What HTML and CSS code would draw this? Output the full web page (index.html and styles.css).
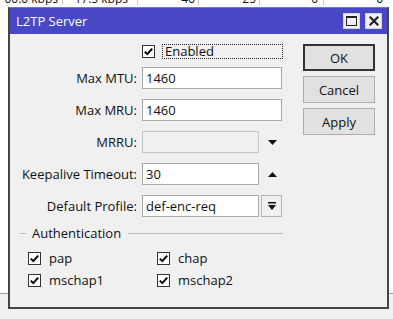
FILE: index.html
```html
<!DOCTYPE html>
<html>
<head>
<meta charset="utf-8">
<link rel="stylesheet" href="styles.css">
</head>
<body>
<div class="desk">
  <div class="table">
    <div class="row">
      <div class="cell c1"><span>00.0 kbps</span></div>
      <div class="cell c2"><span>17.5 kbps</span></div>
      <div class="cell c3"><span>40</span></div>
      <div class="cell c4"><span>25</span></div>
      <div class="cell c5"><span>0</span></div>
      <div class="cell c6"><span>0</span></div>
    </div>
  </div>

  <div class="window">
    <div class="titlebar">
      <span class="title">L2TP Server</span>
      <div class="tbtns">
        <div class="tbtn"><svg width="11" height="10" viewBox="0 0 11 10"><rect x="0.5" y="1" width="10" height="8.5" fill="none" stroke="#222" stroke-width="1"/><rect x="0" y="0" width="11" height="2" fill="#222"/></svg></div>
        <div class="tbtn"><svg width="10" height="10" viewBox="0 0 10 10"><path d="M1.5 1.5 L8.5 8.5 M8.5 1.5 L1.5 8.5" stroke="#222" stroke-width="2.2" stroke-linecap="square"/></svg></div>
      </div>
    </div>

    <div class="body">
      <div class="form">
        <div class="enabled">
          <div class="cb"><svg width="11" height="11" viewBox="0 0 11 11"><path d="M1.8 5.6 L4.3 8.1 L9.2 2.6" fill="none" stroke="#000" stroke-width="2"/></svg></div>
          <div class="focus">Enabled</div>
        </div>

        <div class="field first">
          <div class="lbl">Max MTU:</div>
          <div class="input">1460</div>
        </div>
        <div class="field">
          <div class="lbl">Max MRU:</div>
          <div class="input">1460</div>
        </div>
        <div class="field">
          <div class="lbl">MRRU:</div>
          <div class="input short disabled"></div>
          <div class="arrow"><svg width="9" height="5" viewBox="0 0 9 5"><polygon points="0,0 9,0 4.5,5" fill="#111"/></svg></div>
        </div>
        <div class="field">
          <div class="lbl">Keepalive Timeout:</div>
          <div class="input short">30</div>
          <div class="arrow"><svg width="9" height="5" viewBox="0 0 9 5"><polygon points="0,5 9,5 4.5,0" fill="#111"/></svg></div>
        </div>
        <div class="field">
          <div class="lbl">Default Profile:</div>
          <div class="input short">def-enc-req</div>
          <div class="ddbtn"><svg width="8" height="8" viewBox="0 0 8 8"><rect x="0" y="0" width="8" height="1.5" fill="#111"/><polygon points="0,3 8,3 4,8" fill="#111"/></svg></div>
        </div>

        <div class="group">
          <span class="gline short-line"></span>
          <span class="gtitle">Authentication</span>
          <span class="gline"></span>
        </div>

        <div class="checks">
          <div class="cb-item"><div class="cb"><svg width="11" height="11" viewBox="0 0 11 11"><path d="M1.8 5.6 L4.3 8.1 L9.2 2.6" fill="none" stroke="#000" stroke-width="2"/></svg></div><span>pap</span></div>
          <div class="cb-item"><div class="cb"><svg width="11" height="11" viewBox="0 0 11 11"><path d="M1.8 5.6 L4.3 8.1 L9.2 2.6" fill="none" stroke="#000" stroke-width="2"/></svg></div><span>chap</span></div>
          <div class="cb-item"><div class="cb"><svg width="11" height="11" viewBox="0 0 11 11"><path d="M1.8 5.6 L4.3 8.1 L9.2 2.6" fill="none" stroke="#000" stroke-width="2"/></svg></div><span>mschap1</span></div>
          <div class="cb-item"><div class="cb"><svg width="11" height="11" viewBox="0 0 11 11"><path d="M1.8 5.6 L4.3 8.1 L9.2 2.6" fill="none" stroke="#000" stroke-width="2"/></svg></div><span>mschap2</span></div>
        </div>
      </div>

      <div class="buttons">
        <div class="btn default">OK</div>
        <div class="btn">Cancel</div>
        <div class="btn">Apply</div>
      </div>
    </div>
  </div>
</div>
</body>
</html>
```

FILE: styles.css
```css
body {
  margin: 0;
  font-family: "Open Sans", "Liberation Sans", sans-serif;
  font-size: 13px;
  color: #111;
}

.desk {
  position: relative;
  width: 393px;
  height: 319px;
  overflow: hidden;
  background: #f0f0f0;
}

.table {
  height: 293px;
  background: #fff;
  border-bottom: 1px solid #a0a0a0;
}

.row {
  display: flex;
  height: 5px;
  font-size: 12px;
}

.cell {
  height: 5px;
  overflow: hidden;
  text-align: right;
  line-height: 12px;
  border-right: 1px solid #c8c8c8;
  padding-right: 4px;
  box-sizing: border-box;
}

.cell span {
  display: block;
  margin-top: -7px;
}

.c1 { width: 63px; }
.c2 { width: 75px; padding-right: 9px; }
.c3 { width: 61px; padding-right: 3px; }
.c4 { width: 61px; padding-right: 3px; }
.c5 { width: 64px; padding-right: 5px; }
.c6 { width: 64px; padding-right: 5px; border-right: none; }

.window {
  position: absolute;
  left: 8px;
  top: 7px;
  width: 381px;
  height: 302px;
  box-sizing: border-box;
  border: 2px solid #454545;
  border-top: 1px solid #7a7aa8;
  background: #f0f0f0;
  display: flex;
  flex-direction: column;
}

.titlebar {
  height: 26px;
  flex: none;
  background: #4848c6;
  color: #fff;
  display: flex;
  align-items: center;
  padding: 0 5px 0 6px;
  font-size: 13px;
}

.tbtns {
  margin-left: auto;
  display: flex;
  gap: 5px;
}

.tbtn {
  width: 17px;
  height: 16px;
  box-sizing: border-box;
  background: #f0f0f0;
  border: 1px solid #d4d4e8;
  display: flex;
  align-items: center;
  justify-content: center;
}

.body {
  display: grid;
  grid-template-columns: 1fr 72px;
  padding: 10px 12px 0 0;
  align-items: start;
}

.enabled {
  display: flex;
  align-items: center;
  height: 15px;
  padding-left: 132px;
}

.cb {
  width: 13px;
  height: 13px;
  box-sizing: border-box;
  border: 1px solid #333;
  background: #fff;
  display: flex;
  align-items: center;
  justify-content: center;
  flex: none;
}

.focus {
  margin-left: 7px;
  width: 121px;
  height: 15px;
  box-sizing: border-box;
  border: 1px dotted #222;
  padding-left: 2px;
  line-height: 13px;
}

.field {
  display: flex;
  align-items: center;
  height: 22px;
  margin-top: 10px;
}

.field.first {
  margin-top: 8px;
}

.lbl {
  width: 132px;
  box-sizing: border-box;
  padding-right: 5px;
  text-align: right;
  white-space: nowrap;
  flex: none;
}

.input {
  width: 140px;
  height: 22px;
  box-sizing: border-box;
  border: 1px solid #aaaaaa;
  background: #fff;
  padding: 0 3px;
  display: flex;
  align-items: center;
  flex: none;
}

.input.short {
  width: 117px;
}

.input.disabled {
  background: #f0f0f0;
  border-color: #c6c6c6;
}

.arrow {
  width: 26px;
  display: flex;
  justify-content: center;
}

.ddbtn {
  margin-left: 2px;
  width: 21px;
  height: 22px;
  box-sizing: border-box;
  border: 1px solid #b4b4b4;
  background: #f0f0f0;
  display: flex;
  align-items: center;
  justify-content: center;
}

.group {
  display: flex;
  align-items: center;
  height: 16px;
  margin: 8px 0 0 10px;
  width: 263px;
}

.gline {
  flex: 1;
  height: 1px;
  background: #bcbcbc;
}

.gline.short-line {
  flex: none;
  width: 6px;
}

.gtitle {
  margin: 0 7px 0 6px;
}

.checks {
  display: grid;
  grid-template-columns: 129px 1fr;
  row-gap: 6px;
  padding-left: 18px;
  margin-top: 9px;
}

.cb-item {
  display: flex;
  align-items: center;
  gap: 8px;
  height: 16px;
}

.buttons {
  display: flex;
  flex-direction: column;
  gap: 5px;
}

.btn {
  height: 27px;
  box-sizing: border-box;
  border: 1px solid #adadad;
  background: #e1e1e1;
  display: flex;
  align-items: center;
  justify-content: center;
}

.btn.default {
  border: 2px solid #333;
}
```
